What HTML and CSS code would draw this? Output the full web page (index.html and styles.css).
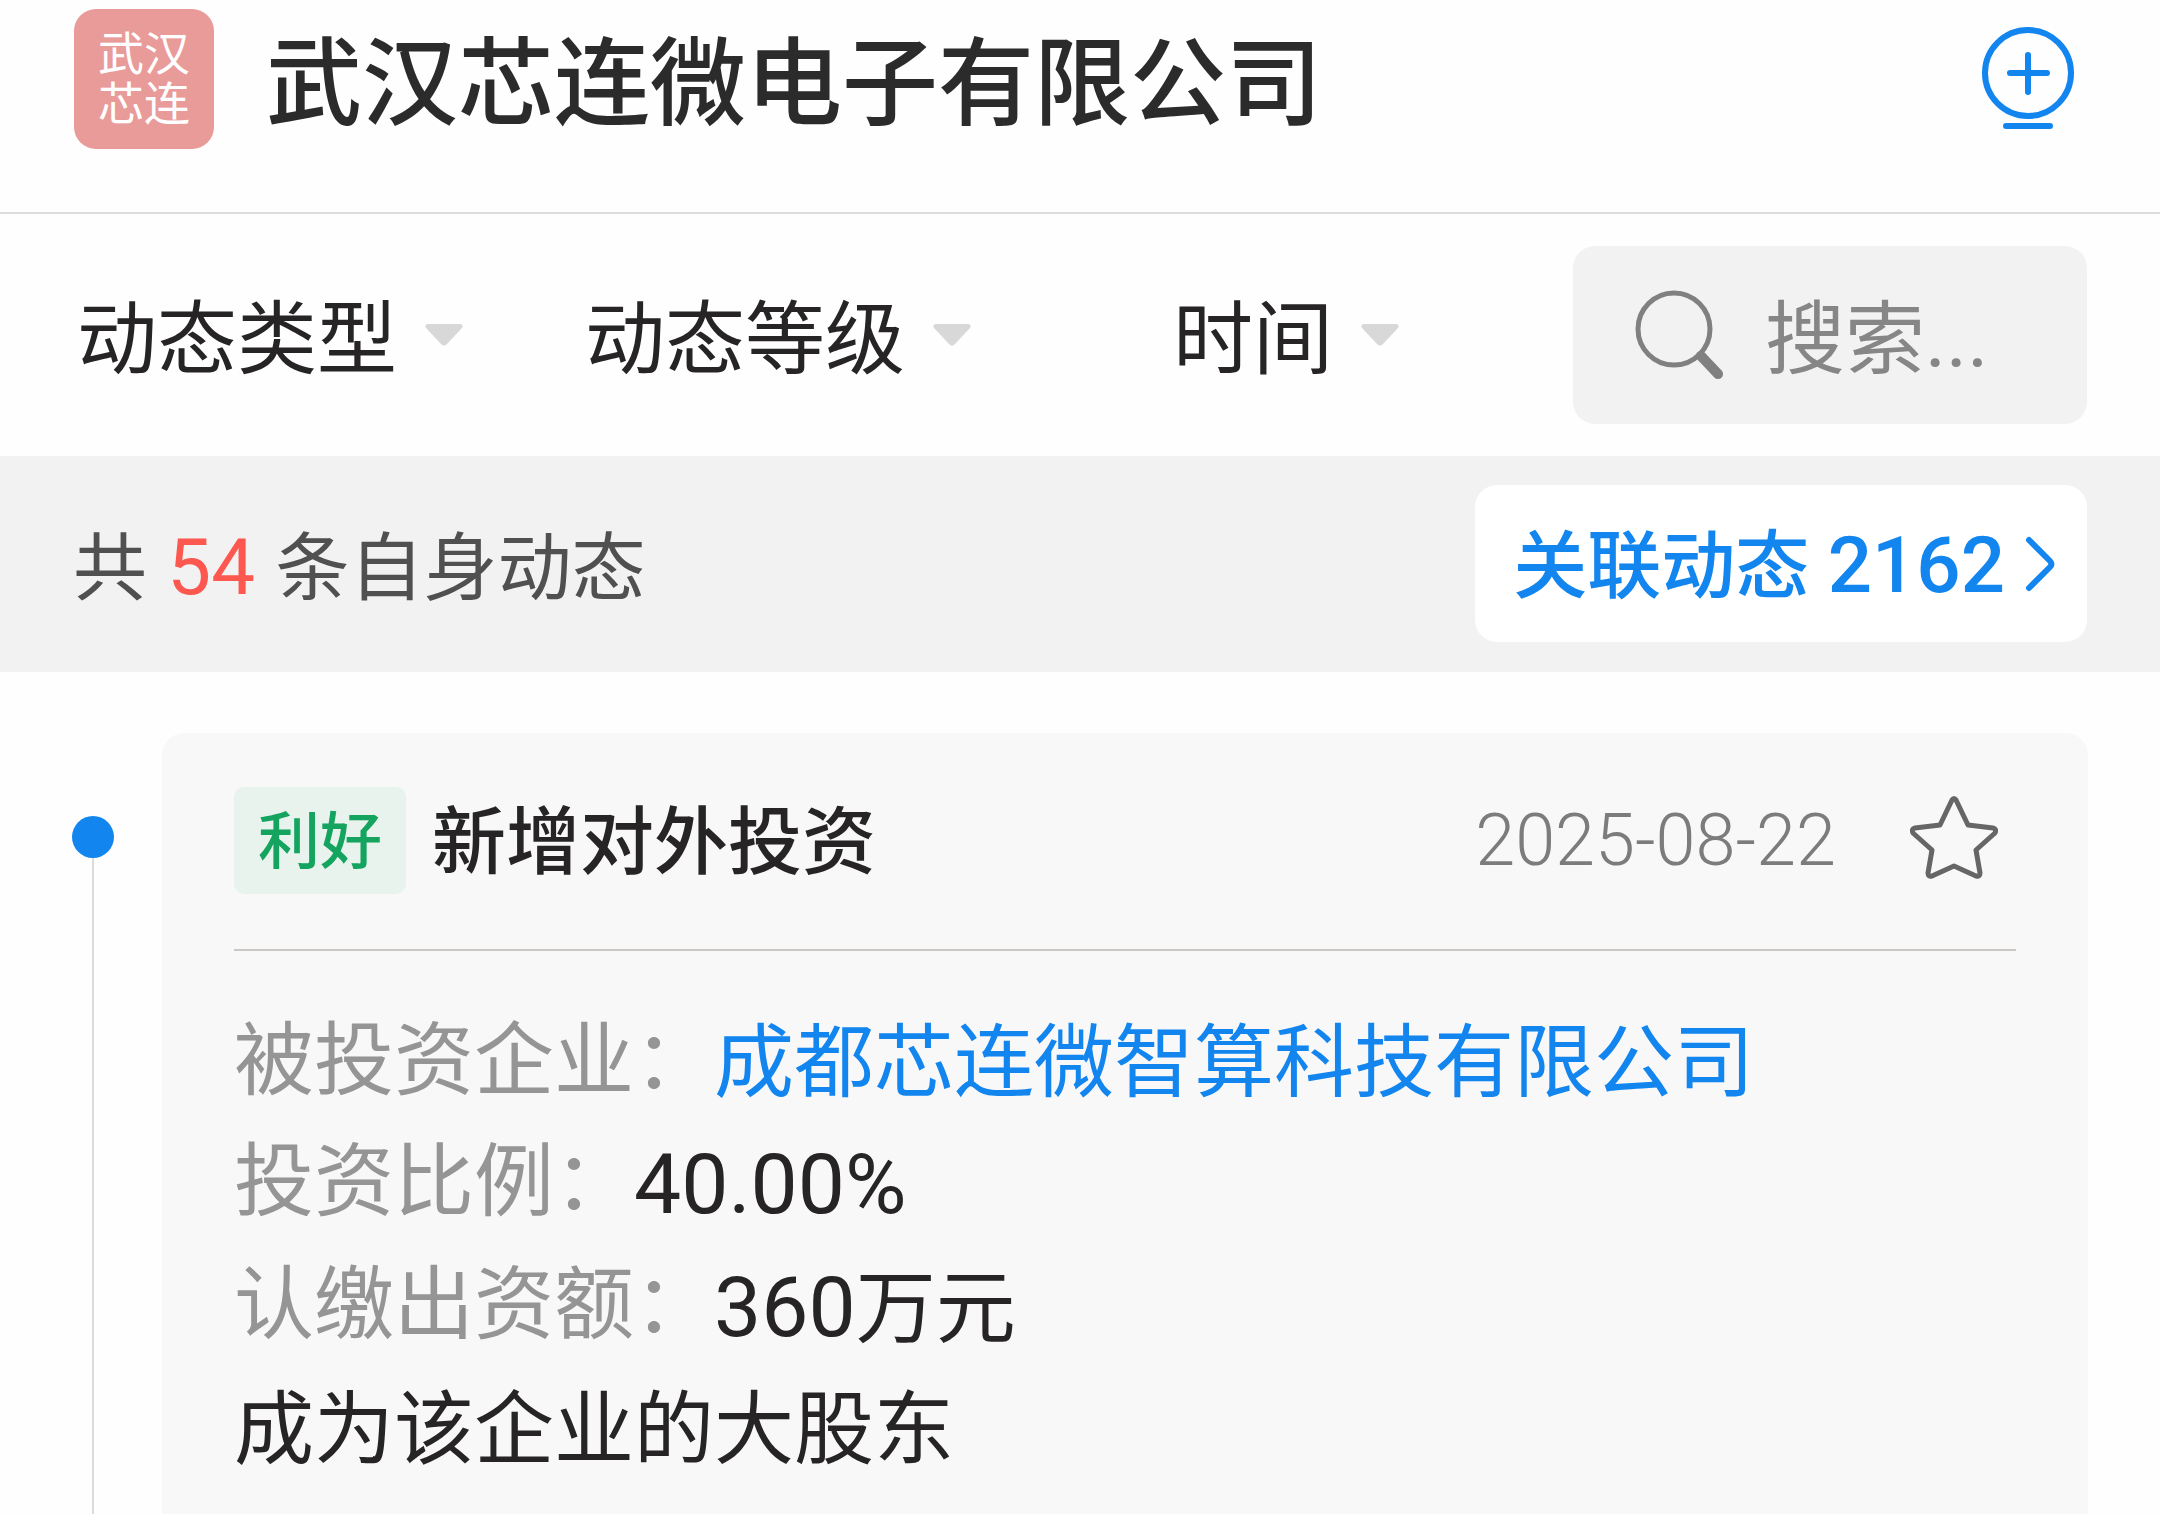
FILE: index.html
```html
<!DOCTYPE html>
<html lang="zh-CN">
<head>
    <meta charset="UTF-8">
    <meta name="viewport" content="width=device-width, initial-scale=1.0">
    <title>武汉芯连微电子有限公司</title>
    <link rel="stylesheet" href="styles.css">
</head>
<body>
    <header class="company-header">
        <div class="company-logo">武汉<br>芯连</div>
        <h1 class="company-name">武汉芯连微电子有限公司</h1>
        <button type="button" class="icon-btn" aria-label="关注">
            <svg width="92" height="104" viewBox="0 0 92 104" fill="none" stroke="#1285ee" stroke-width="6">
                <circle cx="46" cy="46" r="43"/>
                <path d="M46 28v37M28 46h37" stroke-linecap="round"/>
                <path d="M24 99h44" stroke-linecap="round"/>
            </svg>
        </button>
    </header>

    <!-- 筛选栏 -->
    <form class="filter-bar">
        <div class="filter-list">
            <label class="filter">
                <select aria-label="动态类型"><option>动态类型</option></select>
                <svg class="arrow" viewBox="0 0 38 22"><path d="M3 0h32q4 0 2 4L22 20q-3 3-6 0L1 4Q-1 0 3 0z"/></svg>
            </label>
            <label class="filter">
                <select aria-label="动态等级"><option>动态等级</option></select>
                <svg class="arrow" viewBox="0 0 38 22"><path d="M3 0h32q4 0 2 4L22 20q-3 3-6 0L1 4Q-1 0 3 0z"/></svg>
            </label>
            <label class="filter">
                <select aria-label="时间"><option>时间</option></select>
                <svg class="arrow" viewBox="0 0 38 22"><path d="M3 0h32q4 0 2 4L22 20q-3 3-6 0L1 4Q-1 0 3 0z"/></svg>
            </label>
        </div>
        <label class="search-box">
            <svg width="90" height="90" viewBox="0 0 90 90" fill="none" stroke="#808080">
                <circle cx="39" cy="39" r="36" stroke-width="5"/>
                <path d="M66 66l17 18" stroke-width="10" stroke-linecap="round"/>
            </svg>
            <input type="text" placeholder="搜索..." aria-label="搜索">
        </label>
    </form>

    <!-- 统计栏 -->
    <div class="summary-bar">
        <p class="summary-text">共 <span class="count">54</span> 条自身动态</p>
        <a href="#" class="related-link">
            <span>关联动态 <span class="digits">2162</span></span>
            <svg width="30" height="56" viewBox="0 0 30 56" fill="none" stroke="#1285ee" stroke-width="6" stroke-linecap="round" stroke-linejoin="round">
                <path d="M4 4l21 21q3 3 0 6L4 52"/>
            </svg>
        </a>
    </div>

    <!-- 动态时间线 -->
    <main class="timeline">
        <div class="timeline-axis">
            <span class="dot"></span>
            <span class="line"></span>
        </div>
        <article class="card">
            <div class="card-head">
                <span class="tag">利好</span>
                <h2 class="card-title">新增对外投资</h2>
                <time class="card-date" datetime="2025-08-22">2025-08-22</time>
                <button type="button" class="icon-btn" aria-label="收藏">
                    <svg width="88" height="90" viewBox="0 0 88 90" fill="none" stroke="#666" stroke-width="5" stroke-linejoin="round">
                        <path d="M42 4q2-3 4 0l12 25 25 3q4 1 2 5L66 54l4 23q0 4-4 3L44 70 22 80q-4 1-4-3l4-23L3 37q-2-4 2-5l25-3z"/>
                    </svg>
                </button>
            </div>
            <dl class="card-body">
                <div class="row">
                    <dt>被投资企业：</dt>
                    <dd><a href="#">成都芯连微智算科技有限公司</a></dd>
                </div>
                <div class="row">
                    <dt>投资比例：</dt>
                    <dd><span class="digits">40.00%</span></dd>
                </div>
                <div class="row">
                    <dt>认缴出资额：</dt>
                    <dd><span class="digits">360</span>万元</dd>
                </div>
                <div class="row">
                    <dd>成为该企业的大股东</dd>
                </div>
            </dl>
        </article>
    </main>
</body>
</html>
```
FILE: styles.css
```css
* {
    box-sizing: border-box;
}
body {
    margin: 0;
    min-height: 100vh;
    display: flex;
    flex-direction: column;
    font-family: Roboto, "Noto Sans CJK SC", sans-serif;
    font-size: 80px;
    color: #262424;
    background-color: #fefefe;
}
h1, h2, p, dl, dd {
    margin: 0;
}
a {
    color: #1285ee;
    text-decoration: none;
}
svg {
    display: block;
    flex: none;
}
.icon-btn {
    padding: 0;
    border: none;
    background: none;
    cursor: pointer;
}

/* 公司头部 */
.company-header {
    display: flex;
    align-items: center;
    padding: 9px 86px 63px 74px;
    border-bottom: 2px solid #dedcdb;
}
.company-logo {
    width: 140px;
    height: 140px;
    padding-top: 20px;
    border-radius: 22px;
    background-color: #e99b99;
    color: #fff;
    font-size: 46px;
    line-height: 50px;
    text-align: center;
}
.company-name {
    flex: 1;
    margin-left: 52px;
    padding-top: 10px;
    font-size: 96px;
    line-height: 130px;
    font-weight: 500;
    color: #2c2b2c;
}

/* 筛选栏 */
.filter-bar {
    display: flex;
    align-items: center;
    padding: 32px 73px 32px 16px;
}
.filter-list {
    flex: 1;
    display: grid;
    grid-template-columns: repeat(3, 1fr);
    margin-right: 33px;
}
.filter {
    display: flex;
    justify-content: center;
    align-items: center;
    gap: 28px;
}
.filter select {
    appearance: none;
    padding: 10px 0 0;
    border: none;
    background: none;
    font: inherit;
    line-height: 120px;
    color: inherit;
}
.arrow {
    width: 38px;
    height: 22px;
    fill: #d8d8d8;
}
.search-box {
    display: flex;
    align-items: center;
    gap: 40px;
    width: 514px;
    height: 178px;
    padding-left: 62px;
    border-radius: 22px;
    background-color: #f3f2f3;
}
.search-box input {
    flex: 1;
    min-width: 0;
    padding: 10px 0 0;
    border: none;
    outline: none;
    background: none;
    font: inherit;
}
.search-box input::placeholder {
    color: #868686;
}

/* 统计栏 */
.summary-bar {
    display: flex;
    justify-content: space-between;
    align-items: center;
    padding: 29px 73px 30px;
    background-color: #f3f2f3;
    font-size: 74px;
}
.summary-text {
    padding-bottom: 4px;
    color: #505050;
}
.count {
    margin: 0 2px;
    font-size: 78px;
    color: #fd5850;
}
.related-link {
    display: flex;
    align-items: center;
    gap: 20px;
    padding: 0 32px 0 38px;
    border-radius: 22px;
    background-color: #fff;
    font-weight: 500;
}
.related-link > span {
    padding-top: 6px;
    line-height: 150px;
}
.related-link .digits {
    font-size: 78px;
}

/* 时间线 */
.timeline {
    flex: 1;
    display: flex;
    padding: 61px 72px 0;
}
.timeline-axis {
    display: flex;
    flex-direction: column;
    align-items: center;
    width: 42px;
    margin-right: 48px;
    padding-top: 83px;
}
.dot {
    width: 42px;
    height: 42px;
    border-radius: 50%;
    background-color: #1285ee;
}
.line {
    flex: 1;
    width: 2px;
    background-color: #dcdcdd;
}
.card {
    flex: 1;
    padding: 54px 72px 0;
    border-radius: 22px 22px 0 0;
    background-color: #f9f8f8;
}
.card-head {
    display: flex;
    align-items: center;
    padding: 0 18px 55px 0;
    border-bottom: 2px solid #cbc7c5;
}
.tag,
.card-title {
    padding-top: 5px;
    line-height: 102px;
    font-weight: 500;
}
.tag {
    padding-left: 24px;
    padding-right: 24px;
    border-radius: 10px;
    background-color: #e8f3ed;
    color: #14a45f;
    font-size: 62px;
}
.card-title {
    flex: 1;
    margin-left: 26px;
    font-size: 74px;
}
.card-date {
    margin-right: 74px;
    font-size: 72px;
    font-weight: 300;
    color: #7c7c7c;
}
.card-body {
    padding-top: 51px;
}
.card-body .digits {
    font-size: 84px;
}
.row {
    display: flex;
    line-height: 119px;
}
.row dt {
    color: #959595;
}
.row dd {
    padding-top: 2px;
}
```
